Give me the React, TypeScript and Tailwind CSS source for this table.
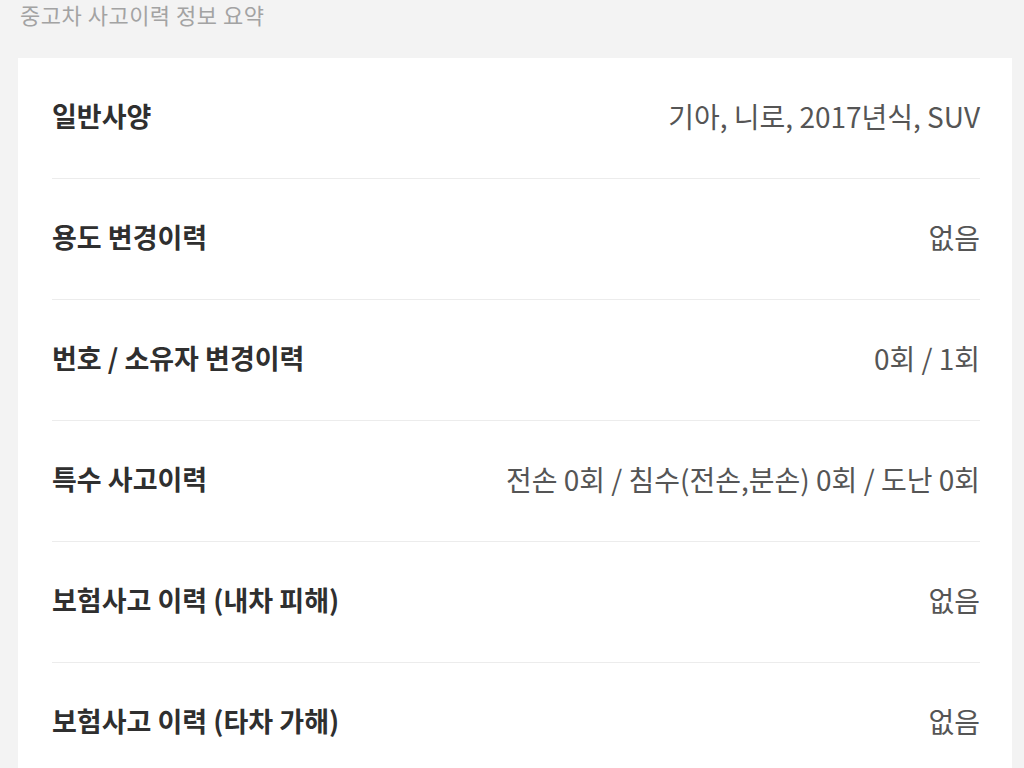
const rows = [
  { label: "일반사양", value: "기아, 니로, 2017년식, SUV" },
  { label: "용도 변경이력", value: "없음" },
  { label: "번호 / 소유자 변경이력", value: "0회 / 1회" },
  { label: "특수 사고이력", value: "전손 0회 / 침수(전손,분손) 0회 / 도난 0회" },
  { label: "보험사고 이력 (내차 피해)", value: "없음" },
  { label: "보험사고 이력 (타차 가해)", value: "없음" },
];

export default function App() {
  return (
    <div
      className="h-[768px] w-[1024px] overflow-hidden bg-[#f3f3f3]"
      style={{ fontFamily: '"Noto Sans CJK KR", "Noto Sans", sans-serif' }}
    >
      <h2 className="ml-[20px] h-[58px] pt-[3px] text-[22px] leading-[22px] tracking-[0.5px] text-[#a3a3a3]">
        중고차 사고이력 정보 요약
      </h2>
      <section className="ml-[18px] mr-[12px] bg-white px-[34px] pr-[32px]">
        {rows.map((row) => (
          <div
            key={row.label}
            className="box-border flex h-[121px] items-center justify-between border-b border-[#ececec] pb-[4px]"
          >
            <span className="text-[27px] font-bold text-[#2f2f2f]">
              {row.label}
            </span>
            <span className="text-[28px] text-[#555]">{row.value}</span>
          </div>
        ))}
      </section>
    </div>
  );
}
